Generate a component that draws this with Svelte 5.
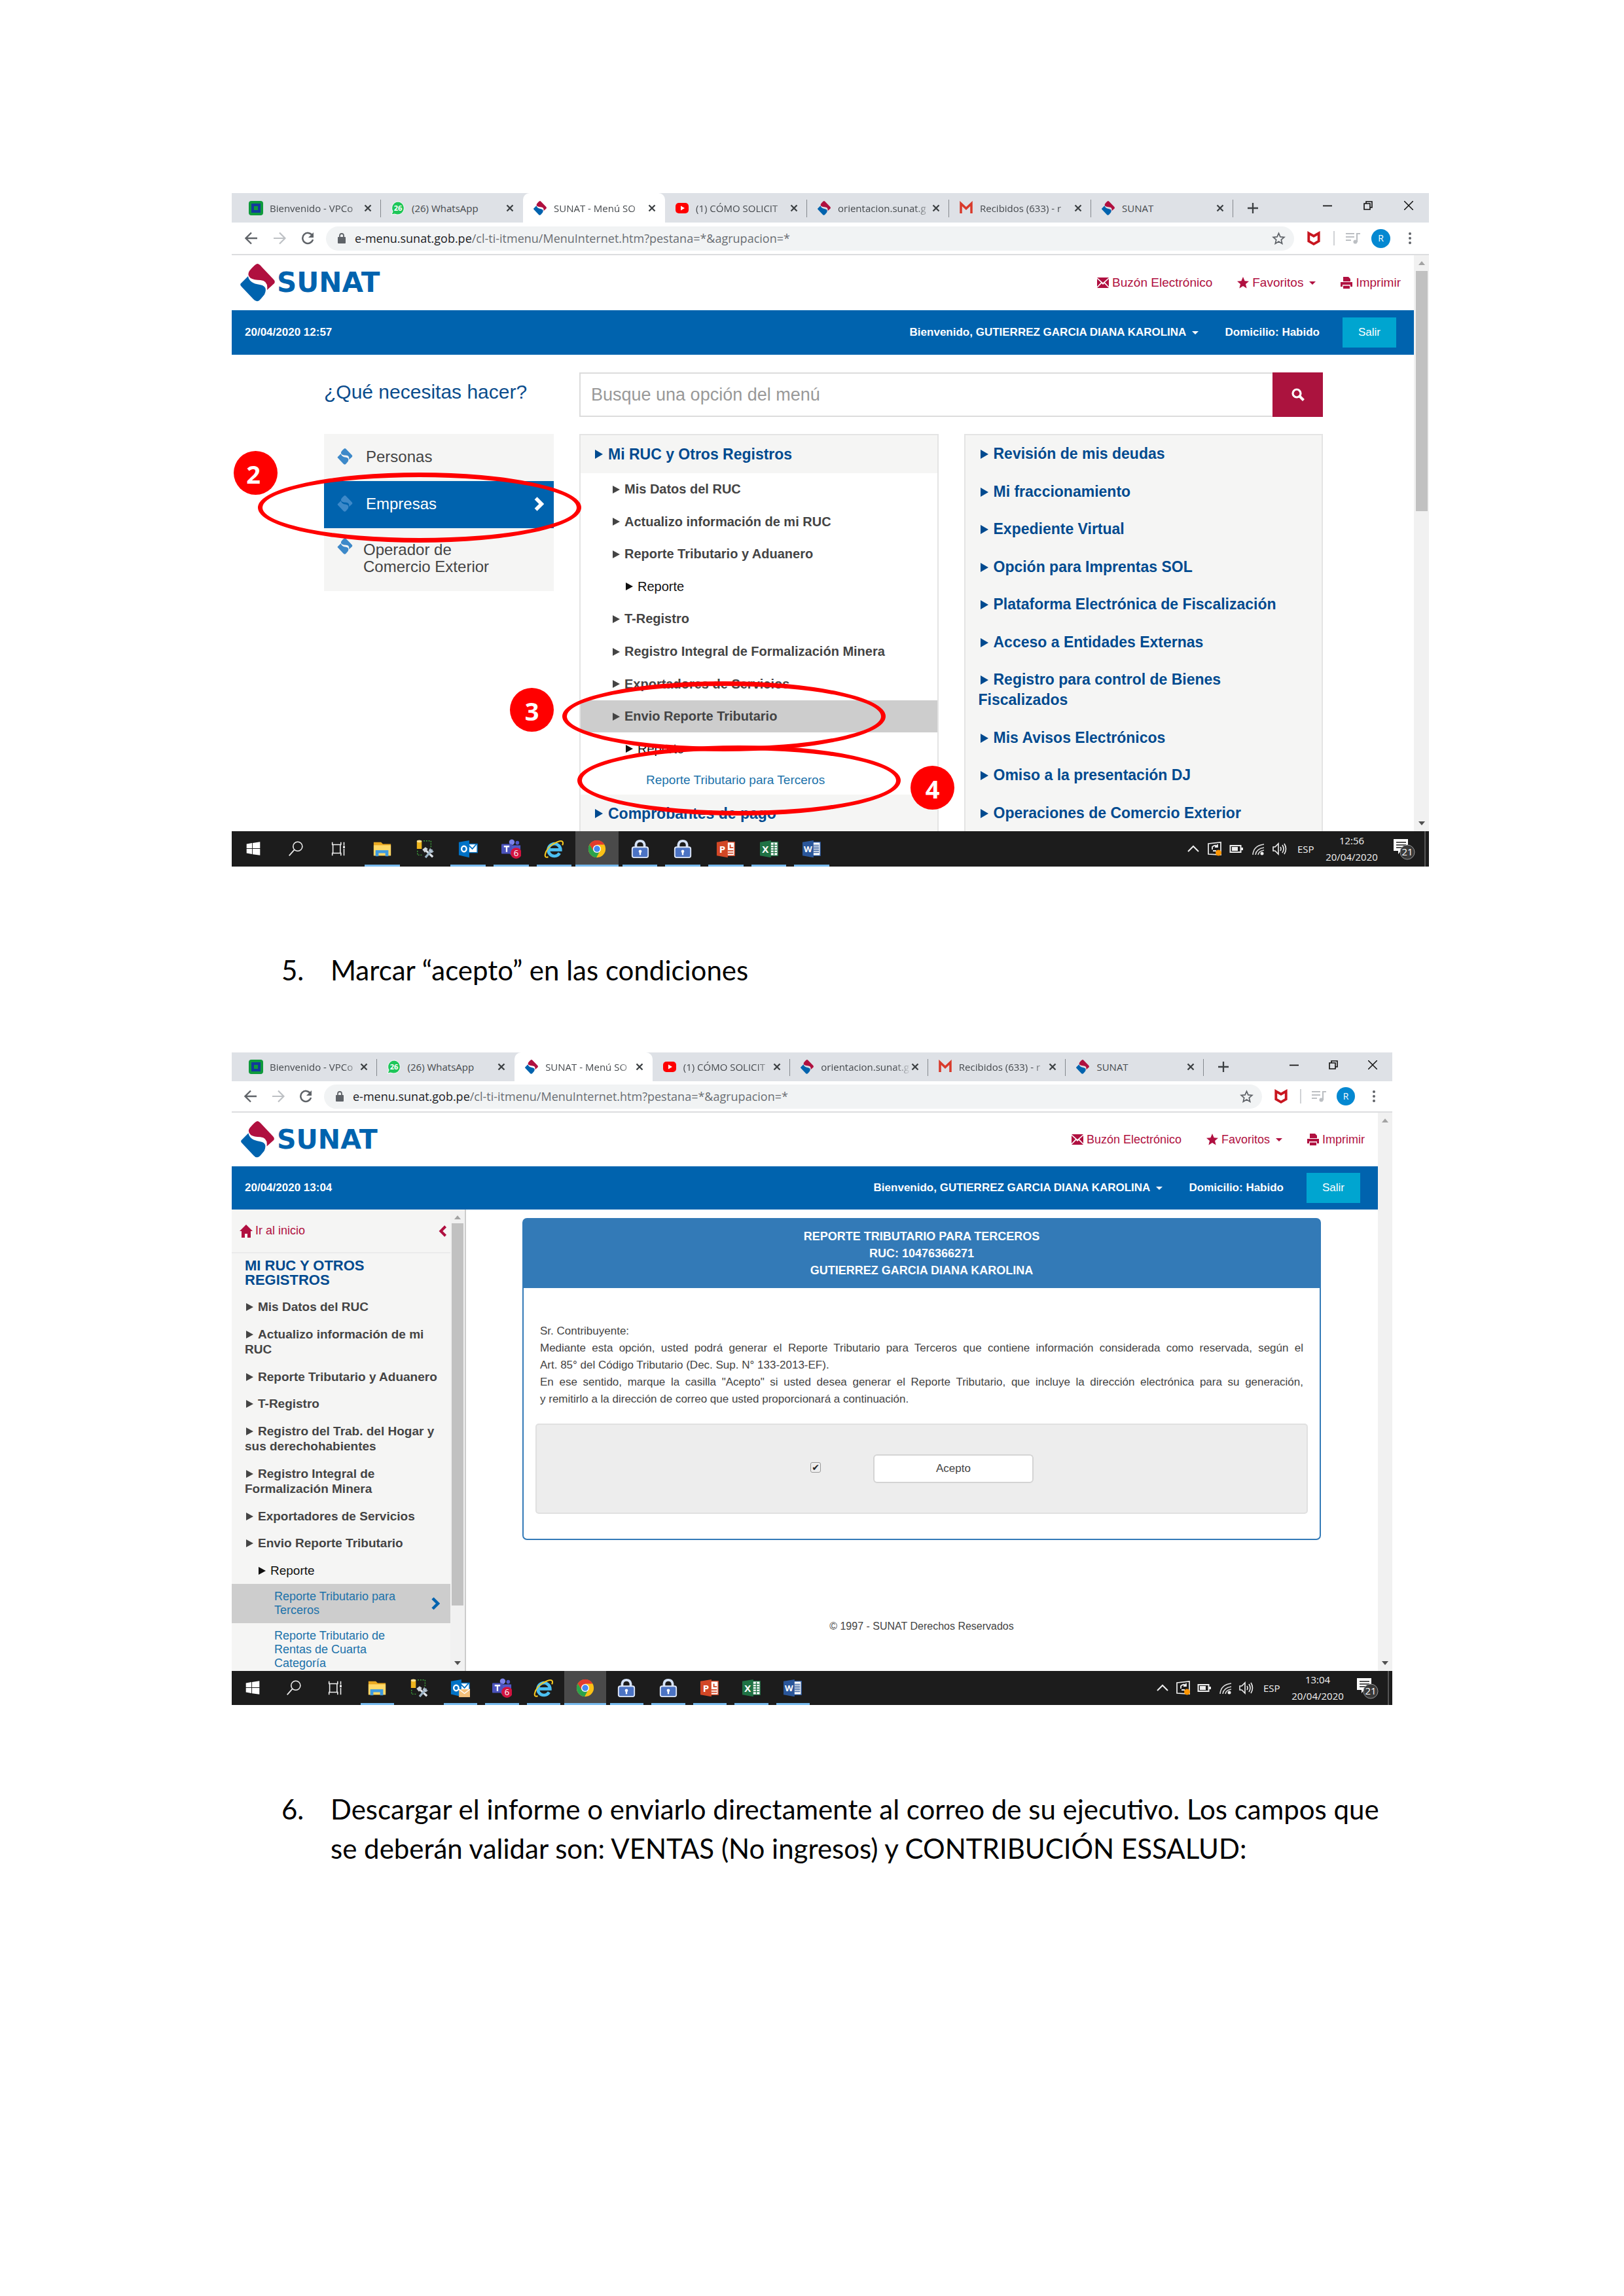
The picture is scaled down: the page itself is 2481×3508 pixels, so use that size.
<script lang="ts">
  const tabs = [
    { icon: 'vpc', text: 'Bienvenido - VPCo', sep: true, faded: true },
    { icon: 'whatsapp', text: '(26) WhatsApp', sep: false },
    { icon: 'sunat', text: 'SUNAT - Menú SO', sep: false, active: true, faded: true },
    { icon: 'youtube', text: '(1) CÓMO SOLICIT', sep: true, faded: true },
    { icon: 'sunat', text: 'orientacion.sunat.g', sep: true, faded: true },
    { icon: 'gmail', text: 'Recibidos (633) - r', sep: true, faded: true },
    { icon: 'sunat', text: 'SUNAT', sep: true },
  ];

  const rucMenu = [
    { text: 'Mis Datos del RUC', level: 1 },
    { text: 'Actualizo información de mi RUC', level: 1 },
    { text: 'Reporte Tributario y Aduanero', level: 1 },
    { text: 'Reporte', level: 2 },
    { text: 'T-Registro', level: 1 },
    { text: 'Registro Integral de Formalización Minera', level: 1 },
    { text: 'Exportadores de Servicios', level: 1 },
    { text: 'Envio Reporte Tributario', level: 1, selected: true },
    { text: 'Reporte', level: 2 },
  ];

  const otherMenu = [
    'Revisión de mis deudas',
    'Mi fraccionamiento',
    'Expediente Virtual',
    'Opción para Imprentas SOL',
    'Plataforma Electrónica de Fiscalización',
    'Acceso a Entidades Externas',
    'Registro para control de Bienes Fiscalizados',
    'Mis Avisos Electrónicos',
    'Omiso a la presentación DJ',
    'Operaciones de Comercio Exterior',
  ];

  const sideMenu = [
    'Mis Datos del RUC',
    'Actualizo información de mi RUC',
    'Reporte Tributario y Aduanero',
    'T-Registro',
    'Registro del Trab. del Hogar y sus derechohabientes',
    'Registro Integral de Formalización Minera',
    'Exportadores de Servicios',
    'Envio Reporte Tributario',
  ];

  const apps = [
    { icon: 'start' },
    { icon: 'search' },
    { icon: 'taskview' },
    { icon: 'folder', open: true },
    { icon: 'tools' },
    { icon: 'outlook', open: true },
    { icon: 'teams', open: true },
    { icon: 'ie', open: true },
    { icon: 'chrome', open: true, current: true },
    { icon: 'padlock', open: true },
    { icon: 'padlock', open: true },
    { icon: 'ppt', open: true },
    { icon: 'excel', open: true },
    { icon: 'word', open: true },
  ];

  let accepted = true;
</script>

{#snippet diamond(top: string, bottom: string)}
  <path fill={top} d="M26 0Q22 1 14 11Q10 17 16 22Q21 25 31 25Q43 26 41 40L52 30Q54 27 51 24L33 5Q29 0 26 0Z" />
  <path fill={bottom} d="M12 19L1 30Q-1 32 2 35L20 54Q26 61 32 53L37 47Q43 34 30 32Q14 30 12 19Z" />
{/snippet}

{#snippet tabIcon(name: string)}
  {#if name === 'vpc'}
    <svg class="fav" viewBox="0 0 22 22"><rect width="22" height="22" rx="4" fill="#0f9a3c" /><rect x="6" y="6" width="10" height="10" fill="#0f9a3c" stroke="#123a9c" stroke-width="4" /></svg>
  {:else if name === 'whatsapp'}
    <svg class="fav" viewBox="0 0 22 22"><path d="M11 1a10 10 0 1 1-5 19L1 21l2-5A10 10 0 0 1 11 1Z" fill="#1fc659" stroke="#fff" /><text x="11" y="15" text-anchor="middle" font-size="11" font-weight="700" fill="#fff">26</text></svg>
  {:else if name === 'sunat'}
    <svg class="fav" viewBox="0 0 53 58">{@render diamond('#b0103f', '#0063ae')}</svg>
  {:else if name === 'youtube'}
    <svg class="fav" viewBox="0 0 22 22"><rect x="1" y="3" width="20" height="16" rx="5" fill="#f00" /><path d="M9 7.500l6 3.500-6 3.500Z" fill="#fff" /></svg>
  {:else}
    <svg class="fav" viewBox="0 0 22 22"><path d="M3 19V4l8 7.500L19 4v15" fill="none" stroke="#d93a2b" stroke-width="3.500" /></svg>
  {/if}
{/snippet}

{#snippet appIcon(name: string, mail: boolean)}
  <svg class="app-icon" viewBox="0 0 32 32">
    {#if name === 'start'}
      <path fill="#fff" d="M5 8l9-1.500V15H5ZM15 6.300L27 4.500V15H15ZM5 16h9v8.500L5 23ZM15 16h12v10.500l-12-1.800Z" />
    {:else if name === 'search'}
      <circle cx="19" cy="12" r="7.500" fill="none" stroke="#eee" stroke-width="1.700" /><path d="M13.500 17.500L5 27" stroke="#eee" stroke-width="1.800" />
    {:else if name === 'taskview'}
      <path d="M5 5v4h14V5M5 27v-4h14v4M6 9h12v14H6ZM24 5v5M24 16v11" fill="none" stroke="#eee" stroke-width="1.700" /><path d="M22.500 11h3v4h-3Z" fill="#eee" />
    {:else if name === 'folder'}
      <path d="M2 5h12l3 3h13v19H2Z" fill="#e9a820" /><path d="M2 10h28v17H2Z" fill="#ffd968" /><path d="M5 18h21v10h-5v-5H10v5H5Z" fill="#3f9be0" />
    {:else if name === 'tools'}
      <path d="M3 3h8v13H3Z" fill="#eeb51d" /><ellipse cx="7" cy="3.500" rx="4" ry="2" fill="#ffe394" /><path d="M14 3h12v10M4 19v7h9" fill="none" stroke="#3da23b" stroke-width="1.500" stroke-dasharray="2 2" /><path d="M17 18L29 29" stroke="#dfe4ea" stroke-width="3.500" /><path d="M28 17L17 30" stroke="#9db4c6" stroke-width="3.500" /><path d="M12 17l5-4 4 3-5 6Z" fill="#cfd5da" /><path d="M25 14l1 5 5 1-4 3-5-4Z" fill="#b7c6d3" />
    {:else if name === 'outlook'}
      <rect x="15" y="8" width="16" height="14" fill="#fff" stroke="#0072c6" stroke-width="1.500" /><path d="M16 9l7 7 7-8" fill="none" stroke="#0072c6" stroke-width="2" /><path d="M1 5l17-3v28L1 26Z" fill="#0072c6" /><ellipse cx="9.500" cy="16" rx="4" ry="4.500" fill="none" stroke="#fff" stroke-width="2.500" />
      {#if mail}<path d="M14 18h18v13H14Z" fill="#f3c07c" /><path d="M14 18l9 7 9-7" fill="none" stroke="#fff" stroke-width="1.500" />{/if}
    {:else if name === 'teams'}
      <circle cx="17" cy="5" r="4.500" fill="#7b83eb" /><circle cx="26" cy="6" r="3" fill="#5059c9" /><path d="M12 10h19v10q-3 7-10 8-8-1-9-9Z" fill="#5059c9" /><rect x="0" y="8" width="17" height="16" rx="1" fill="#4b53bc" /><path d="M4 12h9M8.500 12v9" stroke="#fff" stroke-width="2.500" /><circle cx="24" cy="23" r="9" fill="#d3133f" /><text x="24" y="28" text-anchor="middle" font-size="14" fill="#fff">6</text>
    {:else if name === 'ie'}
      <path d="M8 17.500H27A10 10 0 1 0 25.500 23" fill="none" stroke="#4cc0f2" stroke-width="5" /><path d="M7 29Q1 31 2 25 4 15 15 8 27 1 30 4q2 2 0 6" fill="none" stroke="#f7c81e" stroke-width="2.200" />
    {:else if name === 'chrome'}
      <circle cx="16" cy="16" r="14" fill="#fbc116" /><path d="M16 9H28.200A14 14 0 0 0 3.900 9l6 10Z" fill="#e33b2e" /><path d="M3.900 9A14 14 0 0 0 15 30l6-11-11 0Z" fill="#2ba24c" /><circle cx="16" cy="16" r="6.500" fill="#fff" /><circle cx="16" cy="16" r="5" fill="#4688f1" />
    {:else if name === 'padlock'}
      <path d="M9 14V9q1-6 7-6t7 6v5" fill="none" stroke="#d5e2f7" stroke-width="4" /><rect x="3" y="13" width="26" height="17" rx="3" fill="#4b73c4" stroke="#dfe8f8" stroke-width="2" /><circle cx="16" cy="20" r="2.500" fill="#fff" /><path d="M16 20v6" stroke="#fff" stroke-width="2.500" />
    {:else if name === 'ppt'}
      <rect x="16" y="5" width="14" height="22" fill="#fff" stroke="#d24726" stroke-width="1.500" /><path d="M23 9v5h5M19 19h9M19 23h9" stroke="#d24726" stroke-width="2" fill="none" /><path d="M1 5l18-3v28L1 27Z" fill="#d24726" /><text x="10" y="22" text-anchor="middle" font-size="16" font-weight="700" fill="#fff">P</text>
    {:else if name === 'excel'}
      <rect x="16" y="5" width="14" height="22" fill="#fff" stroke="#1f7244" stroke-width="1.500" /><path d="M24 6v20M19 10h10M19 14h10M19 18h10M19 22h10" stroke="#1f7244" stroke-width="1.500" /><path d="M1 5l18-3v28L1 27Z" fill="#1f7244" /><text x="10" y="22" text-anchor="middle" font-size="16" font-weight="700" fill="#fff">X</text>
    {:else}
      <rect x="16" y="5" width="14" height="22" fill="#fff" stroke="#2a569a" stroke-width="1.500" /><path d="M19 10h9M19 13h9M19 16h9M19 19h9M19 22h9" stroke="#2a569a" stroke-width="1.500" /><path d="M1 5l18-3v28L1 27Z" fill="#2a569a" /><text x="10" y="21" text-anchor="middle" font-size="14" font-weight="700" fill="#fff">W</text>
    {/if}
  </svg>
{/snippet}

{#snippet browserTop()}
  <div class="strip">
    <div class="tabs">
      {#each tabs as tab}
        <div class="tab" class:active={tab.active} class:sep={tab.sep}>
          {@render tabIcon(tab.icon)}
          <span class="tab-text" class:faded={tab.faded}>{tab.text}</span>
          <button class="tab-close" aria-label="Cerrar pestaña"><svg viewBox="0 0 12 12"><path d="M1.500 1.500l9 9M10.500 1.500l-9 9" stroke="#3c4043" stroke-width="2.300" /></svg></button>
        </div>
      {/each}
    </div>
    <button class="new-tab" aria-label="Nueva pestaña"><svg viewBox="0 0 16 16"><path d="M8 0v16M0 8h16" stroke="#3c4043" stroke-width="2.300" /></svg></button>
    <div class="win-controls">
      <button aria-label="Minimizar"><svg viewBox="0 0 14 14"><path d="M0 7.500h14" stroke="#111" stroke-width="1.700" /></svg></button>
      <button aria-label="Restaurar"><svg viewBox="0 0 14 14"><path d="M1 4h9v9H1ZM4 4V1h9v9h-3" fill="none" stroke="#111" stroke-width="1.600" /></svg></button>
      <button aria-label="Cerrar"><svg viewBox="0 0 14 14"><path d="M0 0l14 14M14 0L0 14" stroke="#111" stroke-width="1.500" /></svg></button>
    </div>
  </div>
  <div class="toolbar">
    <button class="nav" aria-label="Atrás"><svg viewBox="0 0 20 20"><path d="M19 10H2M10 1.500L1.500 10l8.500 8.500" fill="none" stroke="#5f6368" stroke-width="2.300" /></svg></button>
    <button class="nav" aria-label="Adelante"><svg viewBox="0 0 20 20"><path d="M1 10h17M10 1.500l8.500 8.500-8.500 8.500" fill="none" stroke="#bdc0c4" stroke-width="2.200" /></svg></button>
    <button class="nav" aria-label="Recargar"><svg viewBox="0 0 20 20"><path d="M17 5.500A8 8 0 1 0 18 12" fill="none" stroke="#5f6368" stroke-width="2.500" /><path d="M19 1v8h-8Z" fill="#5f6368" /></svg></button>
    <div class="url">
      <svg class="lock" viewBox="0 0 12 16"><path d="M3 7V4q0-3 3-3t3 3v3" fill="none" stroke="#5f6368" stroke-width="1.800" /><rect y="6" width="12" height="10" rx="1" fill="#5f6368" /></svg>
      <span class="url-text"><b>e-menu.sunat.gob.pe</b>/cl-ti-itmenu/MenuInternet.htm?pestana=*&amp;agrupacion=*</span>
      <svg class="bookmark" viewBox="0 0 24 24"><path d="M12 3.500l2.500 5.700 6.200.6-4.700 4.100 1.400 6.100-5.400-3.300-5.400 3.300 1.400-6.100-4.700-4.100 6.200-.6Z" fill="none" stroke="#5f6368" stroke-width="1.800" /></svg>
    </div>
    <span class="shield"><svg viewBox="0 0 20 20"><path d="M3 3l7 4 7-4v11l-7 4-7-4Z" fill="none" stroke="#c8151f" stroke-width="3.500" /></svg></span>
    <span class="divider"></span>
    <span class="queue"><svg viewBox="0 0 22 20"><path d="M0 3h13M0 8h13M0 13h8M17 16V3h5" fill="none" stroke="#bcbfc3" stroke-width="2.200" /><circle cx="14.500" cy="15.500" r="3" fill="#bcbfc3" /></svg></span>
    <span class="avatar">R</span>
    <button class="dots" aria-label="Menú"><svg viewBox="0 0 4 20"><circle cx="2" cy="3" r="2" fill="#5f6368" /><circle cx="2" cy="10" r="2" fill="#5f6368" /><circle cx="2" cy="17" r="2" fill="#5f6368" /></svg></button>
  </div>
{/snippet}

{#snippet siteTop(stamp: string)}
  <header class="brand-row">
    <div class="brand">
      <svg viewBox="0 0 53 58">{@render diamond('#b0103f', '#0063ae')}</svg>
      <span>SUNAT</span>
    </div>
    <nav class="links">
      <a href="#buzon"><svg viewBox="0 0 18 16"><path d="M0 0h18L9 8Z M0 2l6 5.500L0 14Z M18 2v12l-6-6.500Z M0 16l7-7 2 2 2-2 7 7Z" fill="#b01040" /></svg>Buzón Electrónico</a>
      <a href="#favoritos"><svg viewBox="0 0 18 18"><path d="M9 0l2.600 6.200 6.400.5-5 4.300 1.600 6.600L9 14l-5.600 3.600L5 11 0 6.700l6.400-.5Z" fill="#b01040" /></svg>Favoritos <i class="caret"></i></a>
      <a href="#imprimir"><svg viewBox="0 0 18 18"><path d="M4 0h8l3 3v4H4Z M0 8h18v7h-3v-3H3v3H0Z M4 13.500h10V18H4Z" fill="#b01040" /></svg>Imprimir</a>
    </nav>
  </header>
  <div class="userbar">
    <strong class="stamp">{stamp}</strong>
    <strong class="user">Bienvenido, GUTIERREZ GARCIA DIANA KAROLINA <i class="caret"></i></strong>
    <strong class="home">Domicilio: Habido</strong>
    <button class="exit">Salir</button>
  </div>
{/snippet}

{#snippet arrow(dir: string)}
  <svg class="arrow" viewBox="0 0 10 6"><path d={dir === 'up' ? 'M0 6L5 0l5 6Z' : 'M0 0h10L5 6Z'} fill={dir === 'up' ? '#a3a3a3' : '#505050'} /></svg>
{/snippet}

{#snippet taskbar(time: string, mail: boolean)}
  <footer class="taskbar">
    <div class="apps">
      {#each apps as app}
        <button class="app" class:open={app.open} class:current={app.current} aria-label={app.icon}>{@render appIcon(app.icon, mail)}</button>
      {/each}
    </div>
    <div class="tray">
      <svg viewBox="0 0 22 22"><path d="M3 15l8-8 8 8" fill="none" stroke="#eee" stroke-width="2" /></svg>
      <svg viewBox="0 0 22 22"><path d="M1 3l19-2v19L1 19Z" fill="none" stroke="#eee" stroke-width="1.700" /><path d="M7 12V8q4-4 8-1M15 4v4h-4M8 14h5" fill="none" stroke="#eee" stroke-width="1.800" /><circle cx="16.500" cy="17" r="4.500" fill="#ff9500" /></svg>
      <svg viewBox="0 0 22 22"><path d="M1.500 6h16v10h-16Z" fill="none" stroke="#eee" stroke-width="2" /><path d="M4 8h9v6H4ZM18 9h3v4h-3Z" fill="#eee" /></svg>
      <svg viewBox="0 0 22 22"><path d="M3 20Q4 6 20 4M7 20Q8 11 20 9M11 20q1-6 9-7" fill="none" stroke="#ddd" stroke-width="1.600" /><circle cx="17" cy="18" r="2.500" fill="#eee" /></svg>
      <svg viewBox="0 0 22 22"><path d="M1 8h3l5-5v16l-5-5H1ZM12 8q2 3 0 6M15 5q4 6 0 12M18 3q5 8 0 16" fill="none" stroke="#eee" stroke-width="1.600" /></svg>
      <span class="lang">ESP</span>
      <span class="clock">{time}<br />20/04/2020</span>
      <span class="notices"><svg viewBox="0 0 34 34"><path d="M1 2h22v18H12l-4 5v-5H1Z" fill="#fff" /><path d="M5 7h15M5 11h15M5 15h9" stroke="#1c1c1c" stroke-width="1.700" /><circle cx="22" cy="22" r="11" fill="#3a3a3a" stroke="#999" /><text x="22" y="27" text-anchor="middle" font-size="15" fill="#fff">21</text></svg></span>
      <span class="desktop-edge"></span>
    </div>
  </footer>
{/snippet}

<main class="doc">
  <section class="window first">
    {@render browserTop()}
    <div class="viewport">
      <div class="site">
        {@render siteTop('20/04/2020 12:57')}
        <div class="menu-page">
          <h1 class="question">¿Qué necesitas hacer?</h1>
          <form class="search">
            <input type="text" placeholder="Busque una opción del menú" aria-label="Buscar opción" />
            <button type="button" aria-label="Buscar"><svg viewBox="0 0 20 20"><circle cx="8" cy="8" r="6" fill="none" stroke="#fff" stroke-width="3.200" /><path d="M12.500 12.500l6 6" stroke="#fff" stroke-width="4" /></svg></button>
          </form>
          <nav class="roles">
            <a class="role" href="#personas"><svg viewBox="0 0 53 58">{@render diamond('#3d89c9', '#3d89c9')}</svg>Personas</a>
            <a class="role on" href="#empresas"><svg viewBox="0 0 53 58">{@render diamond('#3d89c9', '#3d89c9')}</svg>Empresas<svg class="chev" viewBox="0 0 14 20"><path d="M3 2l8 8-8 8" fill="none" stroke="#fff" stroke-width="5" /></svg></a>
            <a class="role two" href="#operador"><svg viewBox="0 0 53 58">{@render diamond('#3d89c9', '#3d89c9')}</svg><span>Operador de<br />Comercio Exterior</span></a>
          </nav>
          <div class="panel tree">
            <a class="group" href="#ruc"><i class="tri"></i>Mi RUC y Otros Registros</a>
            <div class="branch">
              {#each rucMenu as item}
                <a class="node level-{item.level}" class:selected={item.selected} href="#item"><i class="tri"></i>{item.text}</a>
              {/each}
            </div>
            <a class="leaf" href="#terceros">Reporte Tributario para Terceros</a>
            <a class="group" href="#comprobantes"><i class="tri"></i>Comprobantes de pago</a>
          </div>
          <div class="panel others">
            {#each otherMenu as text}
              <a href="#otros"><i class="tri"></i>{text}</a>
            {/each}
          </div>
        </div>
      </div>
      <div class="scroll">{@render arrow('up')}<span class="thumb"></span>{@render arrow('down')}</div>
    </div>
    {@render taskbar('12:56', false)}
    <span class="ring ring-2"></span>
    <span class="ring ring-3"></span>
    <span class="ring ring-4"></span>
    <span class="badge badge-2">2</span>
    <span class="badge badge-3">3</span>
    <span class="badge badge-4">4</span>
  </section>

  <div class="step step-5"><span>5.</span><p>Marcar “acepto” en las condiciones</p></div>

  <section class="window second">
    {@render browserTop()}
    <div class="viewport">
      <div class="site">
        {@render siteTop('20/04/2020 13:04')}
        <div class="report-page">
          <aside class="side">
            <div class="side-content">
              <div class="side-home">
                <a href="#inicio"><svg viewBox="0 0 20 20"><path d="M10 0l10 10h-3v10h-5v-6H8v6H3V10H0Z" fill="#b01040" /></svg>Ir al inicio</a>
                <svg class="back" viewBox="0 0 14 20"><path d="M11 2l-8 8 8 8" fill="none" stroke="#b01040" stroke-width="4.500" /></svg>
              </div>
              <h2>MI RUC Y OTROS REGISTROS</h2>
              <div class="side-list">
                {#each sideMenu as text}
                  <a href="#lado"><i class="tri"></i>{text}</a>
                {/each}
                <a class="inner" href="#reporte"><i class="tri"></i>Reporte</a>
              </div>
              <a class="side-leaf selected" href="#terceros"><span>Reporte Tributario para Terceros</span><svg viewBox="0 0 14 20"><path d="M3 2l8 8-8 8" fill="none" stroke="#0063ae" stroke-width="4.500" /></svg></a>
              <a class="side-leaf" href="#cuarta"><span>Reporte Tributario de Rentas de Cuarta Categoría</span></a>
            </div>
            <div class="scroll">{@render arrow('up')}<span class="thumb"></span>{@render arrow('down')}</div>
          </aside>
          <div class="report">
            <section class="card">
              <h3>REPORTE TRIBUTARIO PARA TERCEROS<br />RUC: 10476366271<br />GUTIERREZ GARCIA DIANA KAROLINA</h3>
              <div class="card-text">
                <p>Sr. Contribuyente:</p>
                <p>Mediante esta opción, usted podrá generar el Reporte Tributario para Terceros que contiene información considerada como reservada, según el Art.&nbsp;85°&nbsp;del&nbsp;Código Tributario (Dec. Sup. N° 133-2013-EF).</p>
                <p>En ese sentido, marque la casilla "Acepto" si usted desea generar el Reporte Tributario, que incluye la dirección electrónica para su generación, y&nbsp;remitirlo&nbsp;a&nbsp;la&nbsp;dirección de correo que usted proporcionará a continuación.</p>
              </div>
              <div class="well">
                <input type="checkbox" bind:checked={accepted} aria-label="Acepto" />
                <button>Acepto</button>
              </div>
            </section>
            <p class="copyright">© 1997 - SUNAT Derechos Reservados</p>
          </div>
        </div>
      </div>
      <div class="scroll">{@render arrow('up')}<span class="space"></span>{@render arrow('down')}</div>
    </div>
    {@render taskbar('13:04', true)}
  </section>

  <div class="step step-6"><span>6.</span><p>Descargar el informe o enviarlo directamente al correo de su ejecutivo. Los campos que se deberán validar son: VENTAS (No ingresos) y CONTRIBUCIÓN ESSALUD:</p></div>
</main>

<style>
  :global(body) { background: #fff; }
  * { box-sizing: border-box; }
  svg { display: block; flex: none; }
  button { border: 0; padding: 0; background: none; font: inherit; color: inherit; display: flex; align-items: center; justify-content: center; }
  a { text-decoration: none; color: inherit; }
  p, h1, h2, h3 { margin: 0; }

  .doc { padding: 295px 298px 0 354px; font-family: "Liberation Sans", Arial, sans-serif; }

  /* numbered steps */
  .step { display: grid; grid-template-columns: 75px 1fr; padding: 0 52px 0 76px; font: 42px/60px Lato, sans-serif; color: #000; }
  .step-5 { margin: 128px 0 96px; }
  .step-6 { margin-top: 129px; }

  /* window frame */
  .window { position: relative; display: flex; flex-direction: column; background: #fff; }
  .first { --tabs: 1519px; --slot: 62px; --strip: 45px; --bar: 50px; --nav: 43px; --shield: 60px; --queue: 56px; --avatar: 29px; --dots: 59px;
    --brand: 84px; --user: 68px; --scroll: 23px; --task: 54px; --apps: 919px; --tray-gap: 11px; --clock-gap: 19px; --small: 15px; --url: 18px; --link: 19px; --strong: 17px; --logo: 58px; --logo-text: 42px;
    height: 1029px; }
  .second { --tabs: 1474px; --slot: 60px; --strip: 44px; --bar: 48px; --nav: 42px; --shield: 58px; --queue: 54px; --avatar: 28px; --dots: 57px;
    --brand: 82px; --user: 66px; --scroll: 22px; --task: 52px; --apps: 889px; --tray-gap: 10px; --clock-gap: 15px; --small: 15px; --url: 18px; --link: 18px; --strong: 17px; --logo: 56px; --logo-text: 41px;
    height: 997px; margin-right: 56px; }

  .strip { display: flex; height: var(--strip); background: #dee1e6; padding-left: 11px; font: var(--small) "Open Sans", sans-serif; color: #45494d; }
  .tabs { display: grid; grid-template-columns: repeat(7, 1fr); width: var(--tabs); }
  .tab { display: flex; align-items: center; padding: 0 14px 0 15px; position: relative; min-width: 0; }
  .tab.sep::after { content: ""; position: absolute; right: 0; top: 10px; bottom: 8px; width: 1px; background: #84888d; }
  .tab.active { background: #fff; border-radius: 10px 10px 0 0; }
  .fav { width: 22px; height: 22px; }
  .tab-text { flex: 1; margin-left: 10px; white-space: nowrap; }
  .tab-text.faded { mask-image: linear-gradient(to right, #000 82%, transparent); }
  .tab-close svg { width: 12px; height: 12px; }
  .new-tab { width: 60px; }
  .new-tab svg { width: 16px; height: 16px; }
  .win-controls { display: flex; margin-left: auto; padding-bottom: 7px; }
  .win-controls button { width: var(--slot); }
  .win-controls svg { width: 14px; height: 14px; }

  .toolbar { display: flex; align-items: center; height: var(--bar); padding-left: 8px; border-bottom: 2px solid #dcdddf; }
  .nav { width: var(--nav); }
  .nav svg { width: 20px; height: 20px; }
  .url { flex: 1; display: flex; align-items: center; height: 37px; margin-left: 7px; padding: 0 12px 0 18px; border-radius: 19px; background: #f1f3f4; font: var(--url) "Open Sans", sans-serif; color: #6a6e73; }
  .url b { font-weight: 400; color: #202124; }
  .lock { width: 12px; height: 16px; margin-right: 14px; }
  .url-text { flex: 1; }
  .bookmark { width: 23px; height: 23px; }
  .shield { width: var(--shield); display: flex; justify-content: center; }
  .shield svg { width: 22px; height: 22px; }
  .divider { width: 2px; height: 22px; background: #d0d2d5; }
  .queue { width: var(--queue); display: flex; justify-content: center; }
  .queue svg { width: 22px; height: 20px; }
  .avatar { width: var(--avatar); height: var(--avatar); border-radius: 50%; background: #0488d1; color: #fff; font: 14px/28px "Open Sans", sans-serif; text-align: center; }
  .dots { width: var(--dots); }
  .dots svg { width: 4px; height: 20px; }

  .viewport { flex: 1; display: flex; min-height: 0; }
  .site { flex: 1; min-width: 0; display: flex; flex-direction: column; overflow: hidden; }
  .scroll { width: var(--scroll); background: #f1f1f1; display: flex; flex-direction: column; align-items: center; padding: 9px 0; }
  .arrow { width: 10px; height: 6px; }
  .thumb { width: 18px; height: 367px; margin: 9px 0 auto; background: #c1c1c1; }
  .space { flex: 1; }

  .brand-row { display: flex; align-items: center; justify-content: space-between; height: var(--brand); padding: 0 20px 0 13px; flex: none; }
  .brand { display: flex; align-items: center; gap: 3px; color: #0063ae; font: 700 var(--logo-text)/1 "DejaVu Sans", sans-serif; }
  .brand svg { height: var(--logo); width: 53px; }
  .links { display: flex; gap: 38px; color: #b01040; font-size: var(--link); }
  .links a { display: flex; align-items: center; gap: 5px; }
  .links svg { width: 18px; height: 18px; }
  .caret { display: inline-block; border: 5px solid transparent; border-top-color: currentColor; border-bottom: 0; margin-left: 4px; vertical-align: middle; }
  .userbar { display: flex; align-items: center; height: var(--user); padding: 0 27px 0 20px; background: #0063ae; color: #fff; font-size: var(--strong); flex: none; }
  .stamp { flex: 1; }
  .home { margin: 0 35px 0 41px; }
  .exit { width: 82px; height: 46px; background: #00a5d0; }

  .tri { display: inline-block; border: 7px solid transparent; border-left: 12px solid currentColor; border-right: 0; margin-right: 8px; }

  /* menu page */
  .menu-page { flex: 1; min-height: 0; display: grid; grid-template-columns: 351px 1fr 1fr; grid-template-rows: 68px 1fr; gap: 26px 39px; padding: 27px 139px 0 141px; }
  .question { font-size: 30px; font-weight: 400; line-height: 60px; color: #0a4c8c; white-space: nowrap; }
  .search { grid-column: span 2; display: flex; }
  .search input { flex: 1; min-width: 0; border: 2px solid #dcdcdc; border-right: 0; padding: 0 16px; font: 27px "Liberation Sans", sans-serif; border-radius: 0; outline: 0; }
  .search input::placeholder { color: #999; opacity: 1; }
  .search button { width: 77px; background: #ab133e; }
  .search svg { width: 20px; height: 20px; }
  .roles { font-size: 24px; color: #444; }
  .role { display: flex; align-items: center; height: 72px; padding: 0 15px 3px 20px; background: #f5f5f4; gap: 20px; }
  .role svg { width: 24px; height: 25px; }
  .role.on { background: #0063ae; color: #fff; }
  .role .chev { width: 16px; height: 22px; margin-left: auto; }
  .role.two { height: 96px; align-items: flex-start; padding-top: 15px; gap: 16px; line-height: 26px; }
  .role.two span { padding-top: 5px; }
  .panel { border: 2px solid #e4e4e4; border-bottom: 0; min-height: 0; overflow: hidden; }
  .tree .group { display: flex; align-items: center; height: 58px; padding-left: 22px; background: #f5f5f4; color: #004a8f; font-size: 23px; font-weight: 700; }
  .branch { display: grid; grid-auto-rows: 1fr; height: 446px; }
  .node { display: flex; align-items: center; padding-left: 49px; font-size: 20px; font-weight: 700; color: #444; }
  .node .tri { border-width: 6px; border-left-width: 11px; border-right: 0; margin-right: 7px; }
  .node.level-2 { padding-left: 69px; font-weight: 400; color: #111; }
  .node.selected { background: #cdcdcd; }
  .leaf { display: flex; align-items: center; height: 45px; padding-left: 100px; font-size: 19px; color: #1c72aa; }
  .others { display: flex; flex-direction: column; justify-content: space-between; background: #f5f5f4; padding: 13px 60px 12px 20px; color: #004a8f; font-size: 23px; font-weight: 700; line-height: 31px; }
  .others .tri { margin-left: 3px; }

  /* report page */
  .report-page { flex: 1; min-height: 0; display: flex; }
  .side { display: flex; border-right: 2px solid #ccc; flex: none; }
  .side-content { width: 334px; background: #f5f5f4; display: flex; flex-direction: column; overflow: hidden; }
  .side .thumb { height: auto; flex: 1; margin: 6px 0 85px; }
  .side-home { display: flex; align-items: center; justify-content: space-between; height: 67px; padding: 0 4px 0 12px; border-bottom: 2px solid #ebebeb; color: #b01040; font-size: 18px; flex: none; }
  .side-home a { display: flex; align-items: center; gap: 4px; }
  .side-home a svg { width: 20px; height: 20px; }
  .side-home .back { width: 14px; height: 18px; }
  h2 { padding: 8px 100px 0 20px; font-size: 22px; line-height: 22px; color: #004a8f; }
  .side-list { display: flex; flex-direction: column; justify-content: space-between; height: 426px; margin-top: 18px; padding: 0 10px 0 20px; font-size: 19px; font-weight: 700; line-height: 23px; color: #444; flex: none; }
  .side-list .tri { border-width: 6px; border-left-width: 11px; border-right: 0; margin: 0 7px 0 2px; }
  .side-list .inner { padding-left: 19px; font-weight: 400; color: #111; }
  .side-leaf { display: flex; align-items: center; justify-content: space-between; padding: 9px 16px 9px 65px; font-size: 18px; line-height: 21px; color: #1c72aa; flex: none; }
  .side-leaf span { width: 200px; }
  .side-leaf svg { width: 14px; height: 20px; }
  .side-leaf.selected { margin-top: 9px; background: #cdcdcd; }
  .report { flex: 1; padding: 13px 87px 0 86px; font-size: 17px; color: #444; }
  .card { border: 2px solid #337ab7; border-radius: 7px; height: 492px; }
  h3 { height: 105px; padding-top: 13px; background: #337ab7; color: #fff; text-align: center; font-size: 18px; line-height: 26px; }
  .card-text { padding: 53px 25px 0; line-height: 26px; text-align: justify; }
  .well { display: flex; align-items: center; height: 138px; margin: 24px 18px 0; padding-left: 418px; background: #ededed; border: 2px solid #e0e0e0; border-radius: 5px; }
  .well input { appearance: none; width: 16px; height: 16px; margin: 0 80px 4px 0; border: 1px solid #999; border-radius: 3px; background: #eee; display: grid; place-items: center; }
  .well input:checked::after { content: "✔"; font: 14px/14px "DejaVu Sans", sans-serif; color: #222; }
  .well button { width: 245px; height: 44px; background: #fff; border: 2px solid #d4d4d4; border-radius: 6px; }
  .copyright { margin-top: 122px; text-align: center; font-size: 16px; line-height: 20px; }

  /* taskbar */
  .taskbar { display: flex; justify-content: space-between; height: var(--task); background: #1c1c1c; color: #f2f2f2; font: 15px "Open Sans", sans-serif; }
  .apps { display: grid; grid-template-columns: repeat(14, 1fr); width: var(--apps); }
  .app { position: relative; }
  .app.open::after { content: ""; position: absolute; left: 6px; right: 6px; bottom: 0; height: 3px; background: #76b9ed; }
  .app.current { background: #4a4a4a; }
  .app.current::after { left: 0; right: 0; }
  .app-icon { width: 30px; height: 30px; }
  .tray { display: flex; align-items: center; }
  .tray svg { width: 22px; height: 22px; margin-right: var(--tray-gap); }
  .lang { margin-left: 5px; width: 39px; }
  .clock { width: 88px; text-align: center; line-height: 25px; }
  .notices { margin-left: var(--clock-gap); }
  .tray .notices svg { width: 34px; height: 34px; margin: 0 14px 0 0; }
  .desktop-edge { width: 7px; align-self: stretch; border-left: 2px solid #555; }

  /* annotations over the first window */
  .ring { position: absolute; width: 494px; height: 107px; border: 7px solid #f00; border-radius: 50%; }
  .ring-2 { left: 40px; top: 427px; }
  .ring-3 { left: 505px; top: 746px; }
  .ring-4 { left: 528px; top: 844px; }
  .badge { position: absolute; width: 67px; height: 67px; border-radius: 50%; background: #f00; color: #fff; font: 700 38px/70px "Open Sans", sans-serif; text-align: center; }
  .badge-2 { left: 3px; top: 394px; padding-right: 7px; }
  .badge-3 { left: 425px; top: 756px; }
  .badge-4 { left: 1037px; top: 875px; }
</style>
